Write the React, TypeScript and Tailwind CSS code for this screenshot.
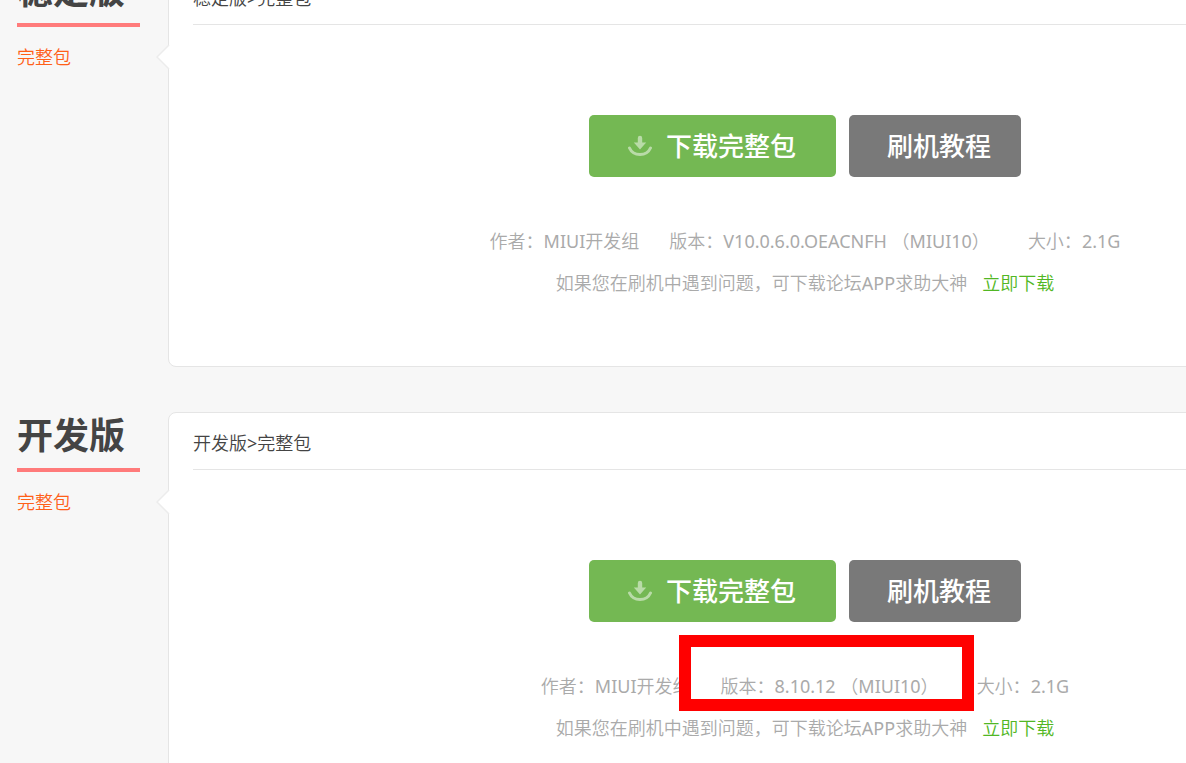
type Release = {
  channel: string;
  version: string;
  size: string;
  highlighted?: boolean;
};

const releases: Release[] = [
  { channel: "稳定版", version: "V10.0.6.0.OEACNFH （MIUI10）", size: "2.1G" },
  { channel: "开发版", version: "8.10.12 （MIUI10）", size: "2.1G", highlighted: true },
];

function DownloadIcon() {
  return (
    <svg width="24" height="22" viewBox="0 0 24 22" fill="none" aria-hidden="true" className="shrink-0 text-[#b9dba8]">
      <path d="M9.800 3a2.200 2.200 0 0 1 4.400 0v4.500h4L12 14.500 5.800 7.500h4z" fill="currentColor" />
      <path d="M1.500 13C3.500 17.500 7.500 19.500 12 19.500s8.500-2 10.500-6.500" stroke="currentColor" strokeWidth="3" strokeLinecap="round" />
    </svg>
  );
}

function ReleaseSection({ channel, version, size, highlighted }: Release) {
  return (
    <section className="flex">
      <aside className="w-[168px] shrink-0 pl-[17px] pr-7">
        <h2 className="h-[60px] border-b-4 border-[#ff7b7b] font-['Noto_Sans','Noto_Sans_CJK_SC',sans-serif] text-4xl leading-[48px] font-bold text-[#444]">
          {channel}
        </h2>
        <a href="#full" className="mt-[18px] block text-lg leading-6 text-[#ff6018]">
          完整包
        </a>
      </aside>

      <div className="relative -mr-[256px] min-w-0 flex-1 rounded-lg border border-[#e5e5e5] bg-white px-6">
        <svg width="14" height="26" viewBox="0 0 14 26" aria-hidden="true" className="absolute top-[76px] -left-[13px]">
          <path d="M14 0L1 13L14 26z" fill="#fff" />
          <path d="M13 1L1 13L13 25" fill="none" stroke="#ececec" strokeWidth="1.500" />
        </svg>
        <p className="h-[57px] border-b border-[#e5e5e5] text-lg leading-[60px] text-[#444]">{channel}&gt;完整包</p>

        <div className="flex flex-col items-center pt-[90px] pb-[62px]">
          <div className="flex gap-[13px] font-['Noto_Sans','Noto_Sans_CJK_SC',sans-serif] text-[26px] font-medium text-white">
            <button type="button" className="flex h-[62px] w-[247px] items-center gap-[14px] rounded-[5px] bg-[#74b853] pl-[39px]">
              <DownloadIcon />
              下载完整包
            </button>
            <button type="button" className="h-[62px] w-[172px] rounded-[5px] bg-[#797979] pl-2">
              刷机教程
            </button>
          </div>

          <div className="mt-[43px] flex gap-[30px] text-lg leading-[42px] whitespace-nowrap text-[#aaa]">
            <span>作者：MIUI开发组</span>
            <span className="relative pr-2">
              版本：{version}
              {highlighted && (
                <span className="pointer-events-none absolute -top-[30px] -left-[42px] z-10 h-[76px] w-[295px] border-12 border-[#f00]" />
              )}
            </span>
            <span>大小：{size}</span>
          </div>
          <p className="flex gap-[15px] text-lg leading-[42px] whitespace-nowrap text-[#aaa]">
            如果您在刷机中遇到问题，可下载论坛APP求助大神
            <a href="#app" className="text-[#51b724]">
              立即下载
            </a>
          </p>
        </div>
      </div>
    </section>
  );
}

export default function App() {
  return (
    <main className="h-screen overflow-hidden bg-[#f7f7f7] font-['Noto_Sans','Noto_Sans_CJK_SC_DemiLight','Noto_Sans_CJK_SC',sans-serif] font-normal">
      <div className="-mt-[33px] flex flex-col gap-[45px]">
        {releases.map((release) => (
          <ReleaseSection key={release.channel} {...release} />
        ))}
      </div>
    </main>
  );
}
